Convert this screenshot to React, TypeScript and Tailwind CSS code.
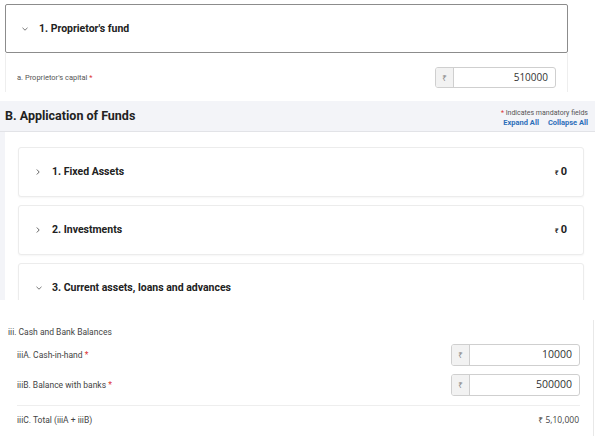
import React from "react";

const Rupee = () => <span style={{ fontFamily: "'Noto Sans', 'DejaVu Sans', sans-serif" }}>₹</span>;

const ChevronDown = () => (
  <svg width="8" height="6" viewBox="0 0 8 6" className="shrink-0">
    <polyline points="1.5,1.8 4,4.2 6.5,1.8" fill="none" stroke="#777" strokeWidth="1" />
  </svg>
);

const ChevronRight = () => (
  <svg width="6" height="8" viewBox="0 0 6 8" className="shrink-0">
    <polyline points="1.8,1.5 4.2,4 1.8,6.5" fill="none" stroke="#666" strokeWidth="1" />
  </svg>
);

function AmountInput({ value, w, h, fs }: { value: string; w: string; h: string; fs: string }) {
  return (
    <div className={`flex ${w} ${h} rounded-[3px] border border-[#cfcfcf] overflow-hidden bg-white`}>
      <div className="w-[18px] shrink-0 flex items-center justify-center bg-[#f2f2f2] border-r border-[#cfcfcf] text-[8px] text-[#888]">
        <Rupee />
      </div>
      <div className={`flex-1 flex items-center justify-end pr-[7px] ${fs} text-[#333] font-['Open_Sans',sans-serif]`}>
        {value}
      </div>
    </div>
  );
}

function SubCard({ title, amount, open }: { title: string; amount?: string; open?: boolean }) {
  return (
    <div className="h-[50px] shrink-0 rounded-[3px] border border-[#ececec] bg-white shadow-[0_1px_2px_rgba(0,0,0,0.04)] flex items-center pl-[16px] pr-[16px]">
      <div className="w-[16px] flex items-center">{open ? <ChevronDown /> : <ChevronRight />}</div>
      <div className="ml-[1px] flex-1 text-[10.5px] font-bold text-[#222]">{title}</div>
      {amount !== undefined && (
        <div className="flex items-baseline gap-[2px] text-[#222] font-bold">
          <span className="text-[7px]"><Rupee /></span>
          <span className="text-[11px]">{amount}</span>
        </div>
      )}
    </div>
  );
}

export default function App() {
  return (
    <div className="w-[600px] h-[436px] bg-white overflow-hidden flex flex-col font-['Roboto',sans-serif]">
      {/* Section 1 */}
      <div className="pt-[4px] pl-[5px] w-[568px]">
        <div className="h-[49px] border border-[#8c8c8c] rounded-[2px] flex items-center pl-[15px] bg-white">
          <div className="w-[18px] flex items-center"><ChevronDown /></div>
          <span className="text-[10.5px] font-bold text-[#222]">1. Proprietor's fund</span>
        </div>
        <div className="h-[39px] border-l border-r border-[#eeeeee] flex items-center justify-between pl-[11px] pr-[11px] pt-[10px]">
          <span className="text-[7.5px] text-[#555]">
            a. Proprietor's capital <span className="text-[#d33]">*</span>
          </span>
          <AmountInput value="510000" w="w-[121px]" h="h-[21px]" fs="text-[10px]" />
        </div>
      </div>

      {/* Section 2 */}
      <div className="mt-[9px] w-[595px]">
        <div className="h-[31px] bg-[#f3f4f8] border-b border-[#e2e3e7] flex items-center justify-between pl-[5px] pr-[7px]">
          <span className="text-[12.5px] font-bold text-[#222]">B. Application of Funds</span>
          <div className="flex flex-col items-end leading-[10px] pt-[3px]">
            <span className="text-[7px] text-[#555]">
              <span className="text-[#d33]">*</span> Indicates mandatory fields
            </span>
            <div className="flex gap-[9px] text-[7.5px] font-bold text-[#2d6fba]">
              <span>Expand All</span>
              <span>Collapse All</span>
            </div>
          </div>
        </div>
        <div className="h-[168px] bg-[#f3f4f8] pl-[5px] overflow-hidden">
          <div className="h-full bg-white pl-[13px] pr-[11px] pt-[15px] flex flex-col gap-[8px]">
            <SubCard title="1. Fixed Assets" amount="0" />
            <SubCard title="2. Investments" amount="0" />
            <SubCard title="3. Current assets, loans and advances" open />
          </div>
        </div>
      </div>

      {/* Section 3 */}
      <div className="mt-[20px] w-[594px] flex-1 border-r border-[#e8e8e8] flex flex-col">
        <div className="pl-[8px] pt-[6px] text-[8.5px] leading-[12px] text-[#444]">iii. Cash and Bank Balances</div>
        <div className="mt-[6px] flex items-center justify-between pl-[17px] pr-[13px]">
          <span className="text-[8.5px] text-[#444]">
            iiiA. Cash-in-hand <span className="text-[#d33]">*</span>
          </span>
          <AmountInput value="10000" w="w-[129px]" h="h-[22px]" fs="text-[10.5px]" />
        </div>
        <div className="mt-[8px] flex items-center justify-between pl-[17px] pr-[13px]">
          <span className="text-[8.5px] text-[#444]">
            iiiB. Balance with banks <span className="text-[#d33]">*</span>
          </span>
          <AmountInput value="500000" w="w-[129px]" h="h-[22px]" fs="text-[10.5px]" />
        </div>
        <div className="mt-[9px] ml-[17px] mr-[13px] border-t border-[#eeeeee]" />
        <div className="mt-[8px] flex items-center justify-between pl-[17px] pr-[14px]">
          <span className="text-[8.5px] text-[#444]">iiiC. Total (iiiA + iiiB)</span>
          <span className="text-[8.5px] text-[#444] font-['Open_Sans',sans-serif]">
            <Rupee /> 5,10,000
          </span>
        </div>
      </div>
    </div>
  );
}
